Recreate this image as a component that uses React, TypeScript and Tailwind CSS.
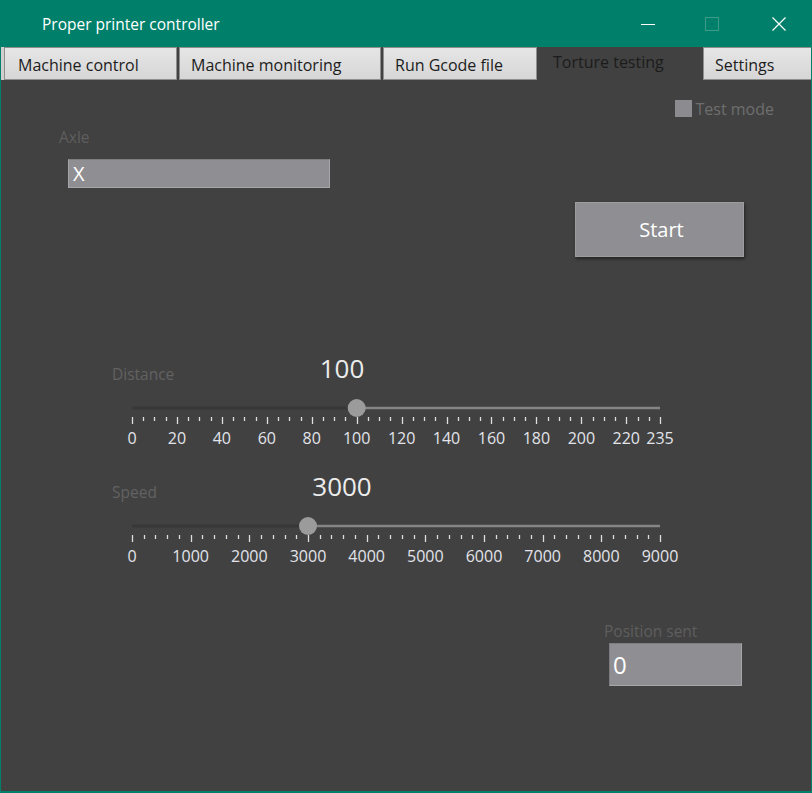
import React from "react";

const FONT = { fontFamily: '"Open Sans", "Noto Sans", sans-serif' };

type SliderProps = {
  label: string;
  value: number;
  max: number;
  tickStep: number;
  majorStep: number;
  labels: number[];
};

const TRACK_X0 = 10; // svg coords (page x 131)
const TRACK_LEN = 528;

function Slider({ label, value, max, tickStep, majorStep, labels }: SliderProps) {
  const pos = (v: number) => TRACK_X0 + (v / max) * TRACK_LEN;
  const ticks: number[] = [];
  for (let v = 0; v <= max + 0.001; v += tickStep) ticks.push(v);
  const hx = pos(value);
  return (
    <div className="flex flex-col">
      <div className="flex h-[30px] ml-[111px]">
        <div className="w-[180px] pt-[12px] text-[15.5px] leading-[18px] text-[#626262]">{label}</div>
        <div className="w-[100px] text-center text-[26px] leading-[30px] text-[#ececec]">{value}</div>
      </div>
      <svg width={560} height={44} className="ml-[121px] block">
        <line x1={TRACK_X0} y1={25} x2={hx} y2={25} stroke="#383838" strokeWidth={3} />
        <line x1={hx} y1={25} x2={TRACK_X0 + TRACK_LEN} y2={25} stroke="#858585" strokeWidth={2.5} />
        {ticks.map((v, i) => {
          const major = Math.abs(v % majorStep) < 0.001 || Math.abs(v - max) < 0.001;
          const x = Math.round(pos(v)) + 0.5;
          return (
            <line key={i} x1={x} y1={34} x2={x} y2={major ? 41 : 38} stroke="#dedede" strokeWidth={1.3} />
          );
        })}
        <circle cx={hx} cy={25} r={9} fill="#9b9b9b" />
      </svg>
      <div className="relative ml-[121px] w-[560px] h-[22px]">
        {labels.map((v) => (
          <span
            key={v}
            className="absolute top-0 -translate-x-1/2 text-[16px] leading-[22px] text-[#e2e4ea] whitespace-nowrap"
            style={{ left: pos(v) }}
          >
            {v}
          </span>
        ))}
      </div>
    </div>
  );
}

export default function App() {
  const distLabels = [0, 20, 40, 60, 80, 100, 120, 140, 160, 180, 200, 220, 235];
  const speedLabels = [0, 1000, 2000, 3000, 4000, 5000, 6000, 7000, 8000, 9000];
  const tabCls =
    "h-[33px] bg-gradient-to-b from-[#e6e6e6] to-[#d6d6d6] border border-[#8e8e8e] flex items-center pt-[2px]";
  return (
    <div className="w-[812px] h-[793px] bg-[#00806a] flex flex-col overflow-hidden" style={FONT}>
      {/* Title bar */}
      <div className="h-[47px] flex items-center shrink-0">
        <div className="ml-[42px] text-[15.5px] text-white leading-[20px] pt-[1px]">Proper printer controller</div>
        <div className="flex-1" />
        <div className="w-[20px] h-[30px] flex items-center justify-center pt-[1px]">
          <div className="w-[14px] h-[1px] bg-white" />
        </div>
        <div className="w-[20px] h-[30px] flex items-center justify-center ml-[44px]">
          <div className="w-[14px] h-[14px] border border-[#3c9c87]" />
        </div>
        <div className="w-[20px] h-[30px] flex items-center justify-center ml-[47px] mr-[23px]">
          <svg width="16" height="16" viewBox="0 0 16 16">
            <path d="M1.5 1.5 L14.5 14.5 M14.5 1.5 L1.5 14.5" stroke="white" strokeWidth="1.2" fill="none" />
          </svg>
        </div>
      </div>

      {/* Body */}
      <div className="flex-1 flex flex-col px-[1px] pb-[2px]">
        {/* Tabs */}
        <div className="h-[34px] flex bg-[#414141] shrink-0 text-[16px] text-[#1c1c1c]">
          <div className="w-[3px] bg-[#cfcfcf] h-[33px]" />
          <div className={`w-[173px] pl-[13px] ${tabCls}`}>Machine control</div>
          <div className="w-[2px]" />
          <div className={`w-[202px] pl-[11px] ${tabCls}`}>Machine monitoring</div>
          <div className="w-[2px]" />
          <div className={`w-[154px] pl-[11px] ${tabCls}`}>Run Gcode file</div>
          <div className="w-[166px] h-[33px] pl-[16px] pt-[3px] leading-[24px]">Torture testing</div>
          <div className={`flex-1 border-r-0 pl-[11px] ${tabCls}`}>Settings</div>
        </div>

        {/* Content */}
        <div className="flex-1 bg-[#414141] flex flex-col">
          {/* Test mode */}
          <div className="mt-[19px] h-[17px] flex justify-end items-center pr-[37px]">
            <div className="w-[17px] h-[17px] bg-[#8c8b90]" />
            <span className="ml-[4px] text-[16px] leading-[17px] pt-[1px] text-[#6e6e6e]">Test mode</span>
          </div>

          {/* Axle label */}
          <div className="mt-[11px] ml-[58px] text-[15.5px] leading-[18px] text-[#5e5e5e]">Axle</div>

          {/* Axle input + Start */}
          <div className="flex items-start">
            <div className="mt-[13px] ml-[67px] w-[262px] h-[29px] bg-[#8f8e93] border border-[#a6a6a8] border-t-[#7d7c80] flex items-center pl-[4px] text-[20px] text-white leading-[26px]">
              X
            </div>
            <div className="mt-[56px] ml-[245px] w-[169px] h-[55px] bg-[#8f8e93] border border-[#9d9ca0] shadow-[1px_2px_3px_rgba(0,0,0,0.45)] flex items-center justify-center pl-[4px] text-[20px] text-white">
              Start
            </div>
          </div>

          {/* Distance */}
          <div className="mt-[96px]">
            <Slider label="Distance" value={100} max={235} tickStep={5} majorStep={20} labels={distLabels} />
          </div>

          {/* Speed */}
          <div className="mt-[22px]">
            <Slider label="Speed" value={3000} max={9000} tickStep={200} majorStep={1000} labels={speedLabels} />
          </div>

          {/* Position sent */}
          <div className="mt-[55px] ml-[603px] text-[15.5px] leading-[18px] text-[#5e5e5e]">Position sent</div>
          <div className="mt-[3px] ml-[608px] w-[133px] h-[43px] bg-[#8f8e93] border border-[#a6a6a8] border-t-[#7d7c80] border-l-[#7d7c80] flex items-center pl-[3px] text-[24px] text-white">
            0
          </div>
        </div>
      </div>
    </div>
  );
}
